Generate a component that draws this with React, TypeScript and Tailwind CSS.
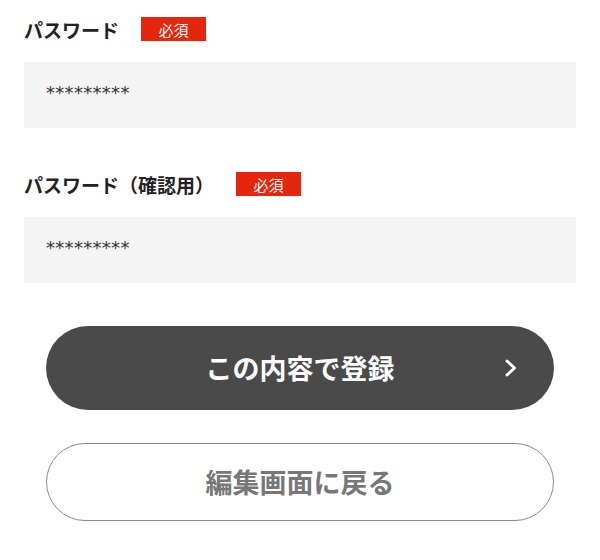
import React from "react";

const font = { fontFamily: '"Noto Sans CJK JP", "Noto Sans", sans-serif' };

function Field({ label }: { label: string }) {
  return (
    <div>
      <div className="flex h-6 items-center gap-[22px]">
        <span className="text-[19px] font-bold leading-none text-[#222]">{label}</span>
        <span className="flex h-6 w-[65px] items-center justify-center bg-[#e3260c] text-[15px] leading-none text-white">
          必須
        </span>
      </div>
      <div className="mt-[21px] flex h-[66px] items-center bg-[#f4f4f4] px-[22px]">
        <span
          className="-mt-[4px] text-[18px] leading-none tracking-[0.3px] text-[#333]"
          style={{ fontFamily: '"DejaVu Sans", sans-serif' }}
        >
          *********
        </span>
      </div>
    </div>
  );
}

export default function App() {
  return (
    <div className="h-[560px] w-[600px] bg-white px-6 pt-[17px]" style={font}>
      <Field label="パスワード" />
      <div className="mt-[44px]">
        <Field label="パスワード（確認用）" />
      </div>
      <div className="mt-[43px] flex flex-col gap-[33px] px-[22px]">
        <button className="relative flex h-[84px] items-center justify-center rounded-full bg-[#4a4a4a] text-[27px] font-bold text-white">
          この内容で登録
          <svg className="absolute right-[36px] top-1/2 -translate-y-1/2" width="14" height="20" viewBox="0 0 14 20" fill="none">
            <polyline points="3,3 10.5,10 3,17" stroke="white" strokeWidth="3" strokeLinecap="round" strokeLinejoin="round" />
          </svg>
        </button>
        <button className="flex h-[78px] items-center justify-center rounded-full border-[1.5px] border-[#8a8a8a] bg-white text-[27px] font-bold text-[#777]">
          編集画面に戻る
        </button>
      </div>
    </div>
  );
}
